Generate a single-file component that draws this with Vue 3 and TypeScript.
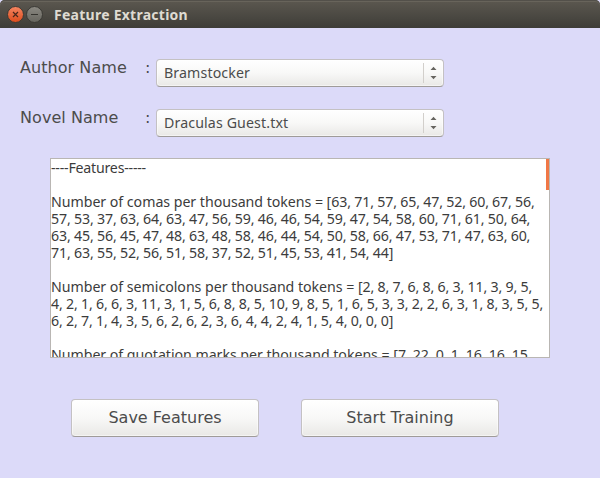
<script setup lang="ts">
import { ref } from 'vue'

interface Field {
  label: string
  value: string
}

interface Line {
  heading?: string
  caption?: string
  numbers?: string
}

const fields = ref<Field[]>([
  { label: 'Author Name', value: 'Bramstocker' },
  { label: 'Novel Name', value: 'Draculas Guest.txt' },
])

const lines: Line[] = [
  { heading: '----Features-----' },
  {},
  { caption: 'Number of comas per thousand tokens = [', numbers: '63, 71, 57, 65, 47, 52, 60, 67, 56,' },
  { numbers: '57, 53, 37, 63, 64, 63, 47, 56, 59, 46, 46, 54, 59, 47, 54, 58, 60, 71, 61, 50, 64,' },
  { numbers: '63, 45, 56, 45, 47, 48, 63, 48, 58, 46, 44, 54, 50, 58, 66, 47, 53, 71, 47, 63, 60,' },
  { numbers: '71, 63, 55, 52, 56, 51, 58, 37, 52, 51, 45, 53, 41, 54, 44]' },
  {},
  { caption: 'Number of semicolons per thousand tokens = [', numbers: '2, 8, 7, 6, 8, 6, 3, 11, 3, 9, 5,' },
  { numbers: '4, 2, 1, 6, 6, 3, 11, 3, 1, 5, 6, 8, 8, 5, 10, 9, 8, 5, 1, 6, 5, 3, 3, 2, 2, 6, 3, 1, 8, 3, 5, 5,' },
  { numbers: '6, 2, 7, 1, 4, 3, 5, 6, 2, 6, 2, 3, 6, 4, 4, 2, 4, 1, 5, 4, 0, 0, 0]' },
  {},
  { caption: 'Number of quotation marks per thousand tokens = [', numbers: '7, 22, 0, 1, 16, 16, 15,' },
]
</script>

<template>
  <div class="window">
    <header class="titlebar">
      <svg class="controls" width="40" height="20" viewBox="0 0 40 20">
        <defs>
          <linearGradient id="close-fill" x1="0" y1="0" x2="0" y2="1">
            <stop offset="0" stop-color="#f58662" />
            <stop offset="1" stop-color="#dc4b1b" />
          </linearGradient>
          <linearGradient id="min-fill" x1="0" y1="0" x2="0" y2="1">
            <stop offset="0" stop-color="#8b8982" />
            <stop offset="1" stop-color="#66655e" />
          </linearGradient>
        </defs>
        <circle cx="9.5" cy="9.5" r="8" fill="url(#close-fill)" stroke="#3a3934" />
        <path d="M7 7l5 5M12 7l-5 5" stroke="#49271b" stroke-width="1.2" />
        <circle cx="28.5" cy="9.5" r="8" fill="url(#min-fill)" stroke="#3a3934" />
        <path d="M25 9.5h7" stroke="#35342f" />
      </svg>
      <h1 class="title">Feature Extraction</h1>
    </header>

    <main class="body">
      <div v-for="field in fields" :key="field.label" class="field">
        <span class="label">{{ field.label }}</span>
        <span class="colon">:</span>
        <div class="combo">
          <span class="value">{{ field.value }}</span>
          <svg class="arrows" width="20" height="22" viewBox="0 0 20 22">
            <path d="M.5 1v20" stroke="#d2cfcb" />
            <path d="M7.5 8h6l-3-3.2zM7.5 14h6l-3 3.2z" fill="#66645f" />
          </svg>
        </div>
      </div>

      <div class="output">
        <div v-for="(line, i) in lines" :key="i" class="line">
          <span v-if="line.heading" class="heading">{{ line.heading }}</span>
          <span v-if="line.caption" class="caption">{{ line.caption }}</span>
          <span v-if="line.numbers" class="numbers">{{ line.numbers }}</span>
        </div>
        <div class="thumb"></div>
      </div>

      <div class="actions">
        <button class="button save" type="button">Save Features</button>
        <button class="button train" type="button">Start Training</button>
      </div>
    </main>
  </div>
</template>

<style>
body {
  background: #dcdaf9;
}
</style>

<style scoped>
.window {
  width: 600px;
  height: 478px;
  box-sizing: border-box;
  overflow: hidden;
  background: #dcdaf9;
  color: #4c4c4c;
  font-family: "DejaVu Sans", sans-serif;
  font-size: 16px;
}

.titlebar {
  display: flex;
  align-items: center;
  height: 28px;
  padding-left: 6px;
  box-sizing: border-box;
  border-radius: 5px 5px 0 0;
  background: linear-gradient(#5c5850, #3e3d38);
  box-shadow: inset 0 1px #53504a, inset 0 2px #68645b;
}

.controls {
  flex: none;
  margin-top: 1px;
}

.title {
  margin: 2px 0 0 8px;
  font: bold 14px/20px "Noto Sans", sans-serif;
  letter-spacing: 0.26px;
  color: #dfdbd2;
  white-space: nowrap;
}

.body {
  padding: 31px 50px 0 20px;
}

.field {
  display: flex;
  height: 28px;
  margin-bottom: 22px;
}

.label {
  width: 125px;
  line-height: 18px;
  letter-spacing: 0.06px;
}

.colon {
  width: 11px;
  line-height: 18px;
}

.combo {
  display: flex;
  align-items: center;
  justify-content: space-between;
  width: 288px;
  box-sizing: border-box;
  padding: 0 0 0 7px;
  border: 1px solid #c4c1c3;
  border-bottom-color: #9f9b99;
  border-radius: 4px;
  background: linear-gradient(#fff, #f8f8f7 50%, #e9e8e6);
  box-shadow: inset 0 0 0 1px rgba(255, 255, 255, 0.5);
}

.value {
  font: 14.2px/20px "Noto Sans", sans-serif;
  letter-spacing: 0.12px;
  color: #4c4c4c;
}

.output {
  position: relative;
  height: 200px;
  width: 500px;
  box-sizing: border-box;
  margin: -1px 0 41px 30px;
  overflow: hidden;
  border: 1px solid #b9b6b3;
  background: #fff;
  color: #3c3c3c;
  font: 14.2px/17px "Noto Sans", sans-serif;
}

.line {
  display: flex;
  height: 17px;
  white-space: pre;
}

.heading {
  letter-spacing: -0.22px;
}

.caption {
  letter-spacing: -0.04px;
}

.numbers {
  letter-spacing: -0.12px;
  word-spacing: -0.26px;
}

.thumb {
  position: absolute;
  top: 0;
  right: 0;
  width: 3px;
  height: 31px;
  background: #f07746;
}

.actions {
  display: flex;
  gap: 42px;
  padding-left: 51px;
}

.button {
  height: 38px;
  padding: 0 0 2px;
  border: 1px solid #c4c1c3;
  border-bottom-color: #9f9b99;
  border-radius: 4px;
  background: linear-gradient(#fff, #f8f8f7 50%, #e9e8e6);
  box-shadow: inset 0 0 0 1px rgba(255, 255, 255, 0.5);
  color: #4c4c4c;
  font: 16px "DejaVu Sans", sans-serif;
}

.save {
  width: 188px;
}

.train {
  width: 198px;
}
</style>
